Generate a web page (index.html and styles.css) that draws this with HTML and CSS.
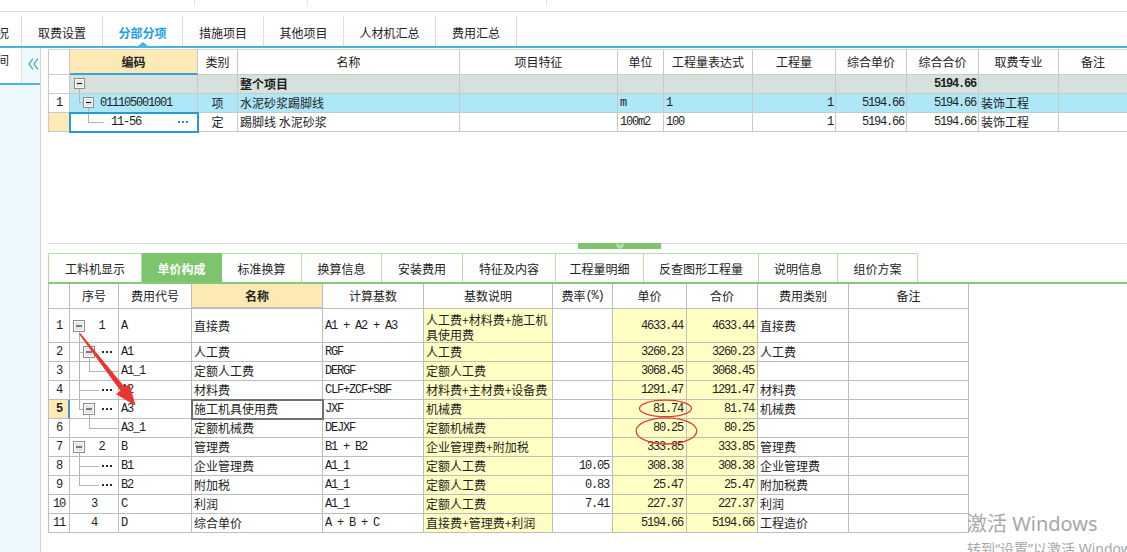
FILE: index.html
```html
<!DOCTYPE html>
<html lang="zh-CN">
<head>
<meta charset="utf-8">
<title>分部分项</title>
<link rel="stylesheet" href="styles.css">
</head>
<body>
<svg class="defs" width="0" height="0" aria-hidden="true">
  <symbol id="bx" viewBox="0 0 12 12"><rect x=".5" y=".5" width="11" height="11" fill="#e6e6e6" stroke="#8d8d8d"/><rect x="1.5" y="1.5" width="9" height="9" fill="none" stroke="#fff"/><rect x="3" y="5.5" width="6" height="1" fill="#111"/></symbol>
  <symbol id="bs" viewBox="0 0 11 11"><rect x=".5" y=".5" width="10" height="10" fill="#e6e6e6" stroke="#8d8d8d"/><rect x="1.5" y="1.5" width="8" height="8" fill="none" stroke="#fff"/><rect x="3" y="5" width="5" height="1" fill="#111"/></symbol>
  <symbol id="dt" viewBox="0 0 10 2"><rect x="0" y="0" width="2" height="2"/><rect x="4" y="0" width="2" height="2"/><rect x="8" y="0" width="2" height="2"/></symbol>
</svg>

<div class="strip"><span class="s1"></span><span class="s2"></span><span class="s3"></span></div>

<nav class="tabs">
  <div class="tab t0"><span>况</span></div>
  <div class="tab t1">取费设置</div>
  <div class="tab t2 active">分部分项</div>
  <div class="tab t3">措施项目</div>
  <div class="tab t4">其他项目</div>
  <div class="tab t5">人材机汇总</div>
  <div class="tab t6">费用汇总</div>
</nav>

<div class="body">
  <aside class="side">
    <div class="side-top">
      <div class="side-tab"><span>间</span></div>
      <div class="side-coll">
        <svg width="18" height="14" viewBox="0 0 18 14"><polyline points="11,0.5 7,6 11,11.5" fill="none" stroke="#3a9de0" stroke-width="1.2"/><polyline points="16,0.5 12,6 16,11.5" fill="none" stroke="#3a9de0" stroke-width="1.2"/></svg>
      </div>
    </div>
  </aside>

  <main class="main">
    <div class="tgrid">
      <div class="tr hdr">
        <div class="c"></div>
        <div class="c key">编码</div>
        <div class="c">类别</div>
        <div class="c">名称</div>
        <div class="c">项目特征</div>
        <div class="c">单位</div>
        <div class="c">工程量表达式</div>
        <div class="c">工程量</div>
        <div class="c">综合单价</div>
        <div class="c">综合合价</div>
        <div class="c">取费专业</div>
        <div class="c">备注</div>
      </div>
      <div class="tr grey">
        <div class="c num"></div>
        <div class="c tree"><svg width="127" height="18"><use href="#bs" x="4" y="3" width="11" height="11"/><rect x="9" y="14" width="1" height="4" fill="#b4b4b4"/></svg></div>
        <div class="c"></div>
        <div class="c b">整个项目</div>
        <div class="c"></div>
        <div class="c"></div>
        <div class="c"></div>
        <div class="c"></div>
        <div class="c"></div>
        <div class="c rt b"><span class="n">5194.66</span></div>
        <div class="c"></div>
        <div class="c"></div>
      </div>
      <div class="tr sel">
        <div class="c num ctr"><span class="n">1</span></div>
        <div class="c tree"><svg width="127" height="18"><rect x="9" y="0" width="1" height="8" fill="#b4b4b4"/><rect x="9" y="8" width="4" height="1" fill="#b4b4b4"/><use href="#bs" x="13" y="3" width="11" height="11"/><rect x="18" y="14" width="1" height="4" fill="#b4b4b4"/></svg><span class="tx n" style="margin-left:30px">011105001001</span></div>
        <div class="c ctr">项</div>
        <div class="c">水泥砂浆踢脚线</div>
        <div class="c"></div>
        <div class="c"><span class="n">m</span></div>
        <div class="c"><span class="n">1</span></div>
        <div class="c rt"><span class="n">1</span></div>
        <div class="c rt"><span class="n">5194.66</span></div>
        <div class="c rt"><span class="n">5194.66</span></div>
        <div class="c">装饰工程</div>
        <div class="c"></div>
      </div>
      <div class="tr">
        <div class="c num cur"></div>
        <div class="c tree focus"><svg width="127" height="18"><rect x="18" y="0" width="1" height="9" fill="#b4b4b4"/><rect x="18" y="9" width="16" height="1" fill="#b4b4b4"/><use href="#dt" x="108" y="8" width="10" height="2" fill="#2d8fd0"/></svg><span class="tx n" style="margin-left:41px">11-56</span></div>
        <div class="c ctr">定</div>
        <div class="c">踢脚线 水泥砂浆</div>
        <div class="c"></div>
        <div class="c"><span class="n">100m2</span></div>
        <div class="c"><span class="n">100</span></div>
        <div class="c rt"><span class="n">1</span></div>
        <div class="c rt"><span class="n">5194.66</span></div>
        <div class="c rt"><span class="n">5194.66</span></div>
        <div class="c">装饰工程</div>
        <div class="c"></div>
      </div>
    </div>

    <div class="split">
      <div class="grip"><svg width="83" height="6" viewBox="0 0 83 6"><polyline points="38.5,0.5 42,3.5 45.5,0.5" fill="none" stroke="#e9f6e4" stroke-width="1"/><polyline points="38.5,2.5 42,5.5 45.5,2.5" fill="none" stroke="#e9f6e4" stroke-width="1"/></svg></div>
    </div>

    <div class="subtabs">
      <div class="st w1">工料机显示</div>
      <div class="st w2 on">单价构成</div>
      <div class="st w3">标准换算</div>
      <div class="st w4">换算信息</div>
      <div class="st w5">安装费用</div>
      <div class="st w6">特征及内容</div>
      <div class="st w7">工程量明细</div>
      <div class="st w8">反查图形工程量</div>
      <div class="st w9">说明信息</div>
      <div class="st w10">组价方案</div>
    </div>

    <div class="lgrid">
      <div class="lr hdr">
        <div class="c"></div>
        <div class="c">序号</div>
        <div class="c">费用代号</div>
        <div class="c key">名称</div>
        <div class="c">计算基数</div>
        <div class="c">基数说明</div>
        <div class="c">费率<span class="n">(%)</span></div>
        <div class="c">单价</div>
        <div class="c">合价</div>
        <div class="c">费用类别</div>
        <div class="c">备注</div>
      </div>

      <div class="lr tall">
        <div class="c ctr"><span class="n">1</span></div>
        <div class="c tree"><svg width="48" height="33"><use href="#bx" x="3" y="11" width="12" height="12"/><rect x="9" y="23" width="1" height="10" fill="#b4b4b4"/></svg><span class="tx n ta">1</span></div>
        <div class="c"><span class="n">A</span></div>
        <div class="c">直接费</div>
        <div class="c"><span class="n">A1 + A2 + A3</span></div>
        <div class="c y wrap">人工费+材料费+施工机<br>具使用费</div>
        <div class="c"></div>
        <div class="c y rt"><span class="n">4633.44</span></div>
        <div class="c y rt"><span class="n">4633.44</span></div>
        <div class="c">直接费</div>
        <div class="c"></div>
      </div>

      <div class="lr">
        <div class="c ctr"><span class="n">2</span></div>
        <div class="c tree"><svg width="48" height="18"><rect x="9" y="0" width="1" height="18" fill="#b4b4b4"/><rect x="9" y="9" width="4" height="1" fill="#b4b4b4"/><use href="#bx" x="13" y="3" width="12" height="12"/><rect x="19" y="15" width="1" height="3" fill="#b4b4b4"/><use href="#dt" x="32" y="8" width="10" height="2" fill="#2a2a2a"/></svg></div>
        <div class="c"><span class="n">A1</span></div>
        <div class="c">人工费</div>
        <div class="c"><span class="n">RGF</span></div>
        <div class="c y">人工费</div>
        <div class="c"></div>
        <div class="c y rt"><span class="n">3260.23</span></div>
        <div class="c y rt"><span class="n">3260.23</span></div>
        <div class="c">人工费</div>
        <div class="c"></div>
      </div>

      <div class="lr">
        <div class="c ctr"><span class="n">3</span></div>
        <div class="c tree"><svg width="48" height="18"><rect x="9" y="0" width="1" height="18" fill="#b4b4b4"/><rect x="19" y="0" width="1" height="9" fill="#b4b4b4"/><rect x="19" y="9" width="29" height="1" fill="#b4b4b4"/></svg></div>
        <div class="c"><span class="n">A1_1</span></div>
        <div class="c">定额人工费</div>
        <div class="c"><span class="n">DERGF</span></div>
        <div class="c y">定额人工费</div>
        <div class="c"></div>
        <div class="c y rt"><span class="n">3068.45</span></div>
        <div class="c y rt"><span class="n">3068.45</span></div>
        <div class="c"></div>
        <div class="c"></div>
      </div>

      <div class="lr">
        <div class="c ctr"><span class="n">4</span></div>
        <div class="c tree"><svg width="48" height="18"><rect x="9" y="0" width="1" height="18" fill="#b4b4b4"/><rect x="9" y="9" width="20" height="1" fill="#b4b4b4"/><use href="#dt" x="32" y="8" width="10" height="2" fill="#2a2a2a"/></svg></div>
        <div class="c"><span class="n">A2</span></div>
        <div class="c">材料费</div>
        <div class="c"><span class="n">CLF+ZCF+SBF</span></div>
        <div class="c y">材料费+主材费+设备费</div>
        <div class="c"></div>
        <div class="c y rt"><span class="n">1291.47</span></div>
        <div class="c y rt"><span class="n">1291.47</span></div>
        <div class="c">材料费</div>
        <div class="c"></div>
      </div>

      <div class="lr">
        <div class="c ctr cur"><span class="n b">5</span></div>
        <div class="c tree"><svg width="48" height="18"><rect x="9" y="0" width="1" height="9" fill="#b4b4b4"/><rect x="9" y="9" width="4" height="1" fill="#b4b4b4"/><use href="#bx" x="13" y="3" width="12" height="12"/><rect x="19" y="15" width="1" height="3" fill="#b4b4b4"/><use href="#dt" x="32" y="8" width="10" height="2" fill="#2a2a2a"/></svg></div>
        <div class="c"><span class="n">A3</span></div>
        <div class="c edit">施工机具使用费</div>
        <div class="c"><span class="n">JXF</span></div>
        <div class="c y">机械费</div>
        <div class="c"></div>
        <div class="c y rt"><span class="n">81.74</span></div>
        <div class="c y rt"><span class="n">81.74</span></div>
        <div class="c">机械费</div>
        <div class="c"></div>
      </div>

      <div class="lr">
        <div class="c ctr"><span class="n">6</span></div>
        <div class="c tree"><svg width="48" height="18"><rect x="19" y="0" width="1" height="9" fill="#b4b4b4"/><rect x="19" y="9" width="29" height="1" fill="#b4b4b4"/></svg></div>
        <div class="c"><span class="n">A3_1</span></div>
        <div class="c">定额机械费</div>
        <div class="c"><span class="n">DEJXF</span></div>
        <div class="c y">定额机械费</div>
        <div class="c"></div>
        <div class="c y rt"><span class="n">80.25</span></div>
        <div class="c y rt"><span class="n">80.25</span></div>
        <div class="c"></div>
        <div class="c"></div>
      </div>

      <div class="lr">
        <div class="c ctr"><span class="n">7</span></div>
        <div class="c tree"><svg width="48" height="18"><use href="#bx" x="3" y="3" width="12" height="12"/><rect x="9" y="15" width="1" height="3" fill="#b4b4b4"/></svg><span class="tx n ta">2</span></div>
        <div class="c"><span class="n">B</span></div>
        <div class="c">管理费</div>
        <div class="c"><span class="n">B1 + B2</span></div>
        <div class="c y">企业管理费+附加税</div>
        <div class="c"></div>
        <div class="c y rt"><span class="n">333.85</span></div>
        <div class="c y rt"><span class="n">333.85</span></div>
        <div class="c">管理费</div>
        <div class="c"></div>
      </div>

      <div class="lr">
        <div class="c ctr"><span class="n">8</span></div>
        <div class="c tree"><svg width="48" height="18"><rect x="9" y="0" width="1" height="18" fill="#b4b4b4"/><rect x="9" y="9" width="20" height="1" fill="#b4b4b4"/><use href="#dt" x="32" y="8" width="10" height="2" fill="#2a2a2a"/></svg></div>
        <div class="c"><span class="n">B1</span></div>
        <div class="c">企业管理费</div>
        <div class="c"><span class="n">A1_1</span></div>
        <div class="c y">定额人工费</div>
        <div class="c rt"><span class="n">10.05</span></div>
        <div class="c y rt"><span class="n">308.38</span></div>
        <div class="c y rt"><span class="n">308.38</span></div>
        <div class="c">企业管理费</div>
        <div class="c"></div>
      </div>

      <div class="lr">
        <div class="c ctr"><span class="n">9</span></div>
        <div class="c tree"><svg width="48" height="18"><rect x="9" y="0" width="1" height="9" fill="#b4b4b4"/><rect x="9" y="9" width="20" height="1" fill="#b4b4b4"/><use href="#dt" x="32" y="8" width="10" height="2" fill="#2a2a2a"/></svg></div>
        <div class="c"><span class="n">B2</span></div>
        <div class="c">附加税</div>
        <div class="c"><span class="n">A1_1</span></div>
        <div class="c y">定额人工费</div>
        <div class="c rt"><span class="n">0.83</span></div>
        <div class="c y rt"><span class="n">25.47</span></div>
        <div class="c y rt"><span class="n">25.47</span></div>
        <div class="c">附加税费</div>
        <div class="c"></div>
      </div>

      <div class="lr">
        <div class="c ctr"><span class="n">10</span></div>
        <div class="c ctr"><span class="n">3</span></div>
        <div class="c"><span class="n">C</span></div>
        <div class="c">利润</div>
        <div class="c"><span class="n">A1_1</span></div>
        <div class="c y">定额人工费</div>
        <div class="c rt"><span class="n">7.41</span></div>
        <div class="c y rt"><span class="n">227.37</span></div>
        <div class="c y rt"><span class="n">227.37</span></div>
        <div class="c">利润</div>
        <div class="c"></div>
      </div>

      <div class="lr">
        <div class="c ctr"><span class="n">11</span></div>
        <div class="c ctr"><span class="n">4</span></div>
        <div class="c"><span class="n">D</span></div>
        <div class="c">综合单价</div>
        <div class="c"><span class="n">A + B + C</span></div>
        <div class="c y">直接费+管理费+利润</div>
        <div class="c"></div>
        <div class="c y rt"><span class="n">5194.66</span></div>
        <div class="c y rt"><span class="n">5194.66</span></div>
        <div class="c">工程造价</div>
        <div class="c"></div>
      </div>
    </div>
  </main>
</div>

<svg class="marks" width="1127" height="552" viewBox="0 0 1127 552" aria-hidden="true">
  <polygon points="80.4,333.7 124.8,387.7 129.1,384.3 135,405 116.5,394.1 120.8,390.7 79.6,334.3" fill="#e8362e" stroke="#e8362e" stroke-width="0.8" stroke-linejoin="round"/>
  <ellipse cx="665.5" cy="408.4" rx="26" ry="8.3" fill="none" stroke="#e0403a" stroke-width="1.3"/>
  <ellipse cx="666.4" cy="430.9" rx="30.3" ry="13.1" fill="none" stroke="#e0403a" stroke-width="1.3"/>
</svg>

<div class="wm">
  <div class="wm1">激活 Windows</div>
  <div class="wm2">转到“设置”以激活 Windows。</div>
</div>
</body>
</html>
```

FILE: styles.css
```css
* { box-sizing: border-box; margin: 0; padding: 0; }

html, body {
  width: 1127px;
  height: 552px;
  overflow: hidden;
  background: #fff;
}

body {
  position: relative;
  font-family: "Noto Sans CJK SC", "Noto Sans", sans-serif;
  font-size: 12px;
  line-height: 14px;
  color: #1e1e1e;
}

.defs { position: absolute; width: 0; height: 0; overflow: hidden; }

.n {
  font-family: "Liberation Mono", "DejaVu Sans Mono", monospace;
  letter-spacing: -1.2px;
}
.b { font-weight: bold; }

/* top strip */
.strip {
  display: flex;
  height: 12px;
  border-bottom: 1px solid #dedede;
}
.strip span { height: 6px; border-right: 1px solid #e2e2e2; }
.s1 { width: 195px; }
.s2 { width: 113px; }
.s3 { width: 239px; }

/* main tabs */
.tabs {
  display: flex;
  align-items: flex-end;
  height: 36px;
  border-bottom: 2px solid #48b4e6;
}
.tab {
  position: relative;
  height: 30px;
  padding-top: 3px;
  display: flex;
  align-items: center;
  justify-content: center;
  border-right: 1px solid #dcdcdc;
  color: #222;
  white-space: nowrap;
}
.t0 { width: 22px; justify-content: flex-end; padding-right: 12px; overflow: hidden; }
.t1 { width: 81px; }
.t2 { width: 80px; }
.t3 { width: 81px; }
.t4 { width: 80px; }
.t5 { width: 92px; }
.t6 { width: 81px; }
.tab.active { color: #1b9ee2; font-weight: bold; }
.tab.active::after {
  content: "";
  position: absolute;
  left: 50%;
  bottom: 0;
  margin-left: -5px;
  border-left: 5px solid transparent;
  border-right: 5px solid transparent;
  border-bottom: 4px solid #48b4e6;
}

/* body */
.body { display: flex; height: 504px; }

.side {
  width: 41px;
  flex: none;
  background: #eef9fd;
  border-right: 1px solid #cdd5d8;
}
.side-top {
  display: flex;
  height: 37px;
  border-bottom: 2px solid #4db3e3;
}
.side-tab {
  width: 22px;
  flex: none;
  background: #fff;
  border-right: 1px solid #e0e0e0;
  display: flex;
  justify-content: flex-end;
  padding: 5px 12px 0 0;
  overflow: hidden;
  white-space: nowrap;
  color: #222;
}
.side-coll { flex: 1; padding-top: 10px; }
.side-coll svg { display: block; }

.main {
  flex: 1;
  min-width: 0;
  padding: 1px 0 0 7px;
  display: flex;
  flex-direction: column;
}

/* cells */
.c {
  display: flex;
  align-items: center;
  padding: 0 2px;
  border-right: 1px solid #c9c9c9;
  border-bottom: 1px solid #c9c9c9;
  white-space: nowrap;
  overflow: hidden;
  min-width: 0;
}
.ctr { justify-content: center; }
.rt { justify-content: flex-end; }
.tree {
  display: grid;
  grid-template-columns: 100%;
  padding: 0;
}
.tree > * { grid-area: 1 / 1; }
.tree svg { display: block; }
.tx { align-self: center; }
.ta { margin-left: 15px; width: 33px; text-align: center; }

/* top grid */
.tgrid {
  flex: none;
  border-left: 1px solid #c9c9c9;
  border-top: 1px solid #d6d6d6;
}
.tr {
  display: grid;
  grid-template-columns: 21px 128px 40px 222px 158px 46px 89px 83px 71px 72px 80px 1fr;
  height: 19px;
}
.tr .c:last-child { border-right: 0; }
.tr.hdr { height: 25px; }
.hdr .c { justify-content: center; color: #222; }
.hdr .key {
  background: #fde9b3;
  font-weight: bold;
  border-bottom: 2px solid #37a2dc;
}
.grey .c { background: #d7e1dc; }
.sel .c { background: #aee7f8; }
.grey .num, .sel .num { background: #fff; }
.cur { background: #fde9b3; }
.focus {
  outline: 2px solid #2a9ad6;
  outline-offset: -1px;
  position: relative;
  z-index: 1;
}

/* splitter */
.split {
  flex: none;
  margin-top: 111px;
  height: 10px;
  border-top: 1px solid #dcdcdc;
}
.grip {
  margin: -1px 0 0 530px;
  width: 83px;
  height: 6px;
  background: #80c46e;
}
.grip svg { display: block; }

/* sub tabs */
.subtabs {
  flex: none;
  display: flex;
  align-items: flex-end;
  height: 31px;
  border-bottom: 2px solid #88c976;
}
.st {
  height: 29px;
  padding-top: 2px;
  display: flex;
  align-items: center;
  justify-content: center;
  border-top: 1px solid #b6e0a8;
  border-right: 1px solid #b6e0a8;
  color: #222;
  white-space: nowrap;
}
.st:first-child { border-left: 1px solid #b6e0a8; }
.st.on {
  background: #7ec46c;
  border-color: #7ec46c;
  color: #fff;
  font-weight: bold;
}
.w1 { width: 94px; }
.w2 { width: 80px; }
.w3 { width: 80px; }
.w4 { width: 80px; }
.w5 { width: 81px; }
.w6 { width: 93px; }
.w7 { width: 88px; }
.w8 { width: 115px; }
.w9 { width: 79px; }
.w10 { width: 80px; }

/* lower grid */
.lgrid {
  flex: none;
  width: 921px;
  border-left: 1px solid #bdbdbd;
}
.lr {
  display: grid;
  grid-template-columns: 21px 49px 73px 131px 101px 129px 60px 74px 71px 91px 120px;
  height: 19px;
}
.lr .c { border-color: #bdbdbd; }
.lr .rt { padding-right: 3px; }
.lr.hdr { height: 25px; }
.lr.tall { height: 34px; }
.y { background: #ffffc4; }
.wrap {
  white-space: normal;
  align-items: flex-end;
  padding-bottom: 0;
  line-height: 15px;
}
.lr .cur {
  background: #fde9b3;
  box-shadow: inset -1px 0 0 #3a9ad8;
  border-right-color: #3a9ad8;
}
.edit {
  outline: 2px solid #707070;
  outline-offset: -1px;
  position: relative;
  z-index: 1;
}

/* overlays */
.marks {
  position: absolute;
  left: 0;
  top: 0;
  pointer-events: none;
}

.wm {
  position: absolute;
  left: 967px;
  top: 511px;
  color: #a8a8a8;
  font-family: "Noto Sans", "Noto Sans CJK SC", sans-serif;
  white-space: nowrap;
  pointer-events: none;
}
.wm1 { font-size: 20px; line-height: 26px; }
.wm2 { font-size: 14px; line-height: 18px; margin-top: 3px; }
```
